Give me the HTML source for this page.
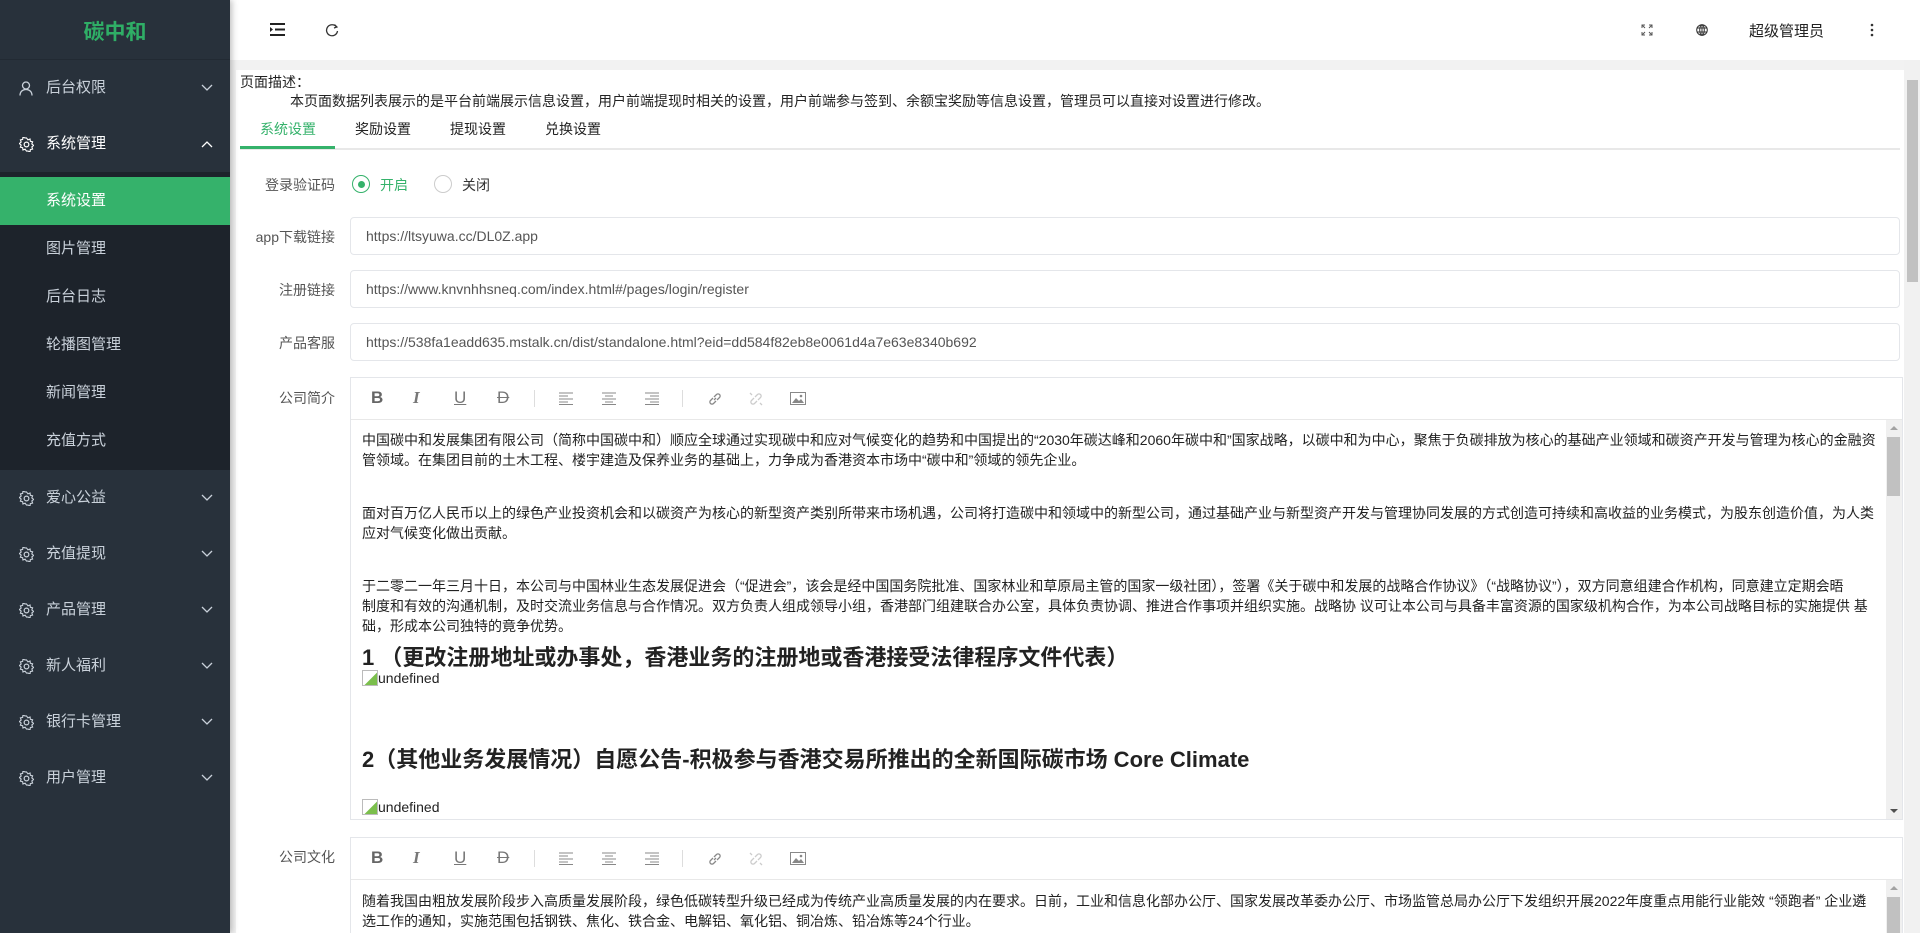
<!DOCTYPE html>
<html><head><meta charset="utf-8">
<style>
*{margin:0;padding:0;box-sizing:border-box}
html{overflow:hidden;width:1920px;height:933px}
body{width:1920px;height:933px;overflow:hidden;background:#f2f2f2;font-family:"Liberation Sans","Noto Sans CJK SC",sans-serif;font-size:14px;color:#333;position:relative}
.abs{position:absolute}
#side{left:0;top:0;width:230px;height:933px;background:#28313b;box-shadow:2px 0 6px rgba(0,0,0,.25);z-index:2}
.logo{position:absolute;left:0;top:0;width:230px;height:60px;line-height:66px;text-align:center;color:#2fae66;font-weight:bold;font-size:21px;border-bottom:1px solid #222a33}
.mi{position:absolute;left:0;width:230px;height:56px;line-height:56px;color:#c9d1da;font-size:15px}
.mi .t{position:absolute;left:46px}
.mi svg.ic{position:absolute;left:19px;top:21px}
.mi svg.ch{position:absolute;left:201px;top:24px}
.sub{position:absolute;left:0;top:172px;width:230px;height:298px;background:#1d232b}
.si{position:absolute;left:0;width:230px;height:48px;line-height:48px;padding-left:46px;color:#c9d1da;font-size:15px}
.si.act{background:#35b26b;color:#fff}
#hdr{left:230px;top:0;width:1690px;height:60px;background:#fff}
#card{left:236px;top:70px;width:1668px;height:863px;background:#fff}
.lbl{position:absolute;width:100px;left:235px;text-align:right;color:#555;font-size:14px}
.inp{position:absolute;left:350px;width:1550px;height:38px;border:1px solid #e4e6ea;border-radius:4px;line-height:36px;padding-left:15px;color:#555;font-size:14px}
.ed{position:absolute;left:350px;width:1553px;border:1px solid #e4e6ea;overflow:hidden}
.tb{position:absolute;left:0;top:0;width:100%;height:42px;border-bottom:1px solid #e8e8e8}
.tb span{position:absolute;top:10px;color:#777;font-size:17px}
.cnt{position:absolute;left:0;top:42px;width:100%;font-size:14px;color:#222;line-height:20px;white-space:nowrap;overflow:hidden}
.cnt div{position:absolute;left:11px}
.vs{position:absolute;right:0;top:42px;width:16px;background:#f0f0f0}
.bi{display:inline-block;width:16px;height:16px;vertical-align:-3px;border:1px solid #bbb;background:linear-gradient(135deg,#fff 55%,#7bbf4c 56%)}
.h{font-size:22px;font-weight:bold;line-height:28px}
.u{font-size:14px;color:#222;line-height:16px}
</style></head><body>
<div id="side" class="abs">
 <div class="logo">碳中和</div>
 <div class="mi" style="top:60px"><svg class="ic" width="14" height="15" viewBox="0 0 14 15"><circle cx="7" cy="4.5" r="3.5" fill="none" stroke="#c9d1da" stroke-width="1.3"/><path d="M1 14.5c0-4 2.7-6 6-6s6 2 6 6" fill="none" stroke="#c9d1da" stroke-width="1.3"/></svg><span class="t">后台权限</span><svg class="ch" width="12" height="8"><path d="M1 1l5 5 5-5" fill="none" stroke="#c9d1da" stroke-width="1.3"/></svg></div>
 <div class="mi" style="top:116px;color:#fff"><svg class="ic" width="15" height="15" viewBox="0 0 16 16"><circle cx="8" cy="8" r="2.5" fill="none" stroke="#fff" stroke-width="1.3"/><path d="M8 1l1.5 2 2.3-.8.3 2.4 2.4.5-.8 2.3 2 1.6-2 1.6.8 2.3-2.4.5-.3 2.4-2.3-.8L8 15l-1.5-2-2.3.8-.3-2.4-2.4-.5.8-2.3-2-1.6 2-1.6-.8-2.3 2.4-.5.3-2.4 2.3.8z" fill="none" stroke="#fff" stroke-width="1.2"/></svg><span class="t">系统管理</span><svg class="ch" width="12" height="8"><path d="M1 7l5-5 5 5" fill="none" stroke="#fff" stroke-width="1.3"/></svg></div>
 <div class="sub">
  <div class="si act" style="top:5px">系统设置</div>
  <div class="si" style="top:53px">图片管理</div>
  <div class="si" style="top:101px">后台日志</div>
  <div class="si" style="top:149px">轮播图管理</div>
  <div class="si" style="top:197px">新闻管理</div>
  <div class="si" style="top:245px">充值方式</div>
 </div>
 <div class="mi" style="top:470px"><svg class="ic" width="15" height="15" viewBox="0 0 16 16"><circle cx="8" cy="8" r="2.5" fill="none" stroke="#c9d1da" stroke-width="1.3"/><path d="M8 1l1.5 2 2.3-.8.3 2.4 2.4.5-.8 2.3 2 1.6-2 1.6.8 2.3-2.4.5-.3 2.4-2.3-.8L8 15l-1.5-2-2.3.8-.3-2.4-2.4-.5.8-2.3-2-1.6 2-1.6-.8-2.3 2.4-.5.3-2.4 2.3.8z" fill="none" stroke="#c9d1da" stroke-width="1.2"/></svg><span class="t">爱心公益</span><svg class="ch" width="12" height="8"><path d="M1 1l5 5 5-5" fill="none" stroke="#c9d1da" stroke-width="1.3"/></svg></div>
 <div class="mi" style="top:526px"><svg class="ic" width="15" height="15" viewBox="0 0 16 16"><circle cx="8" cy="8" r="2.5" fill="none" stroke="#c9d1da" stroke-width="1.3"/><path d="M8 1l1.5 2 2.3-.8.3 2.4 2.4.5-.8 2.3 2 1.6-2 1.6.8 2.3-2.4.5-.3 2.4-2.3-.8L8 15l-1.5-2-2.3.8-.3-2.4-2.4-.5.8-2.3-2-1.6 2-1.6-.8-2.3 2.4-.5.3-2.4 2.3.8z" fill="none" stroke="#c9d1da" stroke-width="1.2"/></svg><span class="t">充值提现</span><svg class="ch" width="12" height="8"><path d="M1 1l5 5 5-5" fill="none" stroke="#c9d1da" stroke-width="1.3"/></svg></div>
 <div class="mi" style="top:582px"><svg class="ic" width="15" height="15" viewBox="0 0 16 16"><circle cx="8" cy="8" r="2.5" fill="none" stroke="#c9d1da" stroke-width="1.3"/><path d="M8 1l1.5 2 2.3-.8.3 2.4 2.4.5-.8 2.3 2 1.6-2 1.6.8 2.3-2.4.5-.3 2.4-2.3-.8L8 15l-1.5-2-2.3.8-.3-2.4-2.4-.5.8-2.3-2-1.6 2-1.6-.8-2.3 2.4-.5.3-2.4 2.3.8z" fill="none" stroke="#c9d1da" stroke-width="1.2"/></svg><span class="t">产品管理</span><svg class="ch" width="12" height="8"><path d="M1 1l5 5 5-5" fill="none" stroke="#c9d1da" stroke-width="1.3"/></svg></div>
 <div class="mi" style="top:638px"><svg class="ic" width="15" height="15" viewBox="0 0 16 16"><circle cx="8" cy="8" r="2.5" fill="none" stroke="#c9d1da" stroke-width="1.3"/><path d="M8 1l1.5 2 2.3-.8.3 2.4 2.4.5-.8 2.3 2 1.6-2 1.6.8 2.3-2.4.5-.3 2.4-2.3-.8L8 15l-1.5-2-2.3.8-.3-2.4-2.4-.5.8-2.3-2-1.6 2-1.6-.8-2.3 2.4-.5.3-2.4 2.3.8z" fill="none" stroke="#c9d1da" stroke-width="1.2"/></svg><span class="t">新人福利</span><svg class="ch" width="12" height="8"><path d="M1 1l5 5 5-5" fill="none" stroke="#c9d1da" stroke-width="1.3"/></svg></div>
 <div class="mi" style="top:694px"><svg class="ic" width="15" height="15" viewBox="0 0 16 16"><circle cx="8" cy="8" r="2.5" fill="none" stroke="#c9d1da" stroke-width="1.3"/><path d="M8 1l1.5 2 2.3-.8.3 2.4 2.4.5-.8 2.3 2 1.6-2 1.6.8 2.3-2.4.5-.3 2.4-2.3-.8L8 15l-1.5-2-2.3.8-.3-2.4-2.4-.5.8-2.3-2-1.6 2-1.6-.8-2.3 2.4-.5.3-2.4 2.3.8z" fill="none" stroke="#c9d1da" stroke-width="1.2"/></svg><span class="t">银行卡管理</span><svg class="ch" width="12" height="8"><path d="M1 1l5 5 5-5" fill="none" stroke="#c9d1da" stroke-width="1.3"/></svg></div>
 <div class="mi" style="top:750px"><svg class="ic" width="15" height="15" viewBox="0 0 16 16"><circle cx="8" cy="8" r="2.5" fill="none" stroke="#c9d1da" stroke-width="1.3"/><path d="M8 1l1.5 2 2.3-.8.3 2.4 2.4.5-.8 2.3 2 1.6-2 1.6.8 2.3-2.4.5-.3 2.4-2.3-.8L8 15l-1.5-2-2.3.8-.3-2.4-2.4-.5.8-2.3-2-1.6 2-1.6-.8-2.3 2.4-.5.3-2.4 2.3.8z" fill="none" stroke="#c9d1da" stroke-width="1.2"/></svg><span class="t">用户管理</span><svg class="ch" width="12" height="8"><path d="M1 1l5 5 5-5" fill="none" stroke="#c9d1da" stroke-width="1.3"/></svg></div>
</div>

<div id="hdr" class="abs">
 <svg class="abs" style="left:40px;top:23px" width="15" height="13"><path d="M0 1h15M5 6.5h10M0 12h15" stroke="#222" stroke-width="2"/><path d="M0 4l3 2.5-3 2.5z" fill="#222"/></svg>
 <svg class="abs" style="left:95px;top:23px" width="14" height="14" viewBox="0 0 14 14"><path d="M11.5 4A5.5 5.5 0 1 0 12.5 8" fill="none" stroke="#333" stroke-width="1.3"/><path d="M9.5 1.5L12 4 9 5" fill="none" stroke="#333" stroke-width="1.2"/></svg>
 <svg class="abs" style="left:1411px;top:24px" width="12" height="12"><path d="M1 4V1h3M8 1h3v3M11 8v3H8M4 11H1V8M1 1l3 3M11 1L8 4M11 11L8 8M1 11l3-3" fill="none" stroke="#555" stroke-width="1"/></svg>
 <svg class="abs" style="left:1466px;top:24px" width="12" height="12" viewBox="0 0 12 12"><circle cx="6" cy="6" r="5.3" fill="none" stroke="#333" stroke-width="1"/><ellipse cx="6" cy="6" rx="2.3" ry="5.3" fill="none" stroke="#333" stroke-width="1"/><path d="M.7 4h10.6M.7 8h10.6M6 .7v10.6" stroke="#333" stroke-width="1"/></svg>
 <div class="abs" style="left:1519px;top:20px;font-size:15px;color:#222">超级管理员</div>
 <svg class="abs" style="left:1640px;top:23px" width="4" height="14"><circle cx="2" cy="2" r="1.3" fill="#333"/><circle cx="2" cy="7" r="1.3" fill="#333"/><circle cx="2" cy="12" r="1.3" fill="#333"/></svg>
</div>

<div class="abs" style="left:1904px;top:60px;width:16px;height:873px;background:#f1f1f1"></div>
<div class="abs" style="left:1907px;top:80px;width:11px;height:202px;background:#c1c1c1"></div>

<div id="card" class="abs"></div>
<div class="abs" style="left:240px;top:72px;font-size:14px;color:#222">页面描述：</div>
<div class="abs" style="left:290px;top:91px;font-size:14px;color:#222;white-space:nowrap">本页面数据列表展示的是平台前端展示信息设置，用户前端提现时相关的设置，用户前端参与签到、余额宝奖励等信息设置，管理员可以直接对设置进行修改。</div>

<div class="abs" style="left:240px;top:148px;width:1660px;height:2px;background:#e8e8e8"></div>
<div class="abs" style="left:240px;top:146px;width:95px;height:3px;background:#35b26b"></div>
<div class="abs" style="left:260px;top:119px;font-size:14px;color:#35b26b">系统设置</div>
<div class="abs" style="left:355px;top:119px;font-size:14px;color:#222">奖励设置</div>
<div class="abs" style="left:450px;top:119px;font-size:14px;color:#222">提现设置</div>
<div class="abs" style="left:545px;top:119px;font-size:14px;color:#222">兑换设置</div>

<div class="lbl" style="top:175px">登录验证码</div>
<div class="abs" style="left:352px;top:175px;width:18px;height:18px;border:1.5px solid #35b26b;border-radius:50%"></div>
<div class="abs" style="left:357.5px;top:180.5px;width:7px;height:7px;background:#35b26b;border-radius:50%"></div>
<div class="abs" style="left:380px;top:175px;color:#35b26b">开启</div>
<div class="abs" style="left:434px;top:175px;width:18px;height:18px;border:1.5px solid #ccc;border-radius:50%"></div>
<div class="abs" style="left:462px;top:175px;color:#333">关闭</div>

<div class="lbl" style="top:227px">app下载链接</div>
<div class="inp" style="top:217px">https://ltsyuwa.cc/DL0Z.app</div>
<div class="lbl" style="top:280px">注册链接</div>
<div class="inp" style="top:270px">https://www.knvnhhsneq.com/index.html#/pages/login/register</div>
<div class="lbl" style="top:333px">产品客服</div>
<div class="inp" style="top:323px">https://538fa1eadd635.mstalk.cn/dist/standalone.html?eid=dd584f82eb8e0061d4a7e63e8340b692</div>

<div class="lbl" style="top:388px">公司简介</div>
<div class="ed" style="top:377px;height:443px">
 <div class="tb">
  <span style="left:20px;font-weight:bold;color:#666">B</span>
  <span style="left:62px;font-style:italic;font-family:'Liberation Serif',serif;font-weight:bold">I</span>
  <span style="left:103px;text-decoration:underline">U</span>
  <span style="left:146px;text-decoration:line-through">D</span>
  <i style="position:absolute;left:183px;top:12px;width:1px;height:17px;background:#ddd"></i>
  <svg class="abs" style="left:208px;top:14px" width="14" height="13"><path d="M0 1h14M0 4h9M0 7h14M0 10h9M0 12.5h14" stroke="#888"/></svg>
  <svg class="abs" style="left:251px;top:14px" width="14" height="13"><path d="M0 1h14M3 4h8M0 7h14M3 10h8M0 12.5h14" stroke="#888"/></svg>
  <svg class="abs" style="left:294px;top:14px" width="14" height="13"><path d="M0 1h14M5 4h9M0 7h14M5 10h9M0 12.5h14" stroke="#888"/></svg>
  <i style="position:absolute;left:331px;top:12px;width:1px;height:17px;background:#ddd"></i>
  <svg class="abs" style="left:357px;top:14px" width="14" height="14"><path d="M6 8L8 6M5 6L2.5 8.5a2 2 0 0 0 3 3L8 9M9 8l2.5-2.5a2 2 0 0 0-3-3L6 5" fill="none" stroke="#888" stroke-width="1.3"/></svg>
  <svg class="abs" style="left:398px;top:14px" width="14" height="14"><path d="M5 6L2.5 8.5a2 2 0 0 0 3 3L8 9M9 8l2.5-2.5a2 2 0 0 0-3-3L6 5M1 1l2 2M13 13l-2-2" fill="none" stroke="#ccc" stroke-width="1.3"/></svg>
  <svg class="abs" style="left:439px;top:14px" width="16" height="13"><rect x=".5" y=".5" width="15" height="12" fill="none" stroke="#888"/><path d="M2 11l4-5 3 3 2-2 3 4z" fill="#888"/><circle cx="11" cy="4" r="1.3" fill="#888"/></svg>
 </div>
 <div class="cnt" style="height:399px">
  <div style="top:10px">中国碳中和发展集团有限公司（简称中国碳中和）顺应全球通过实现碳中和应对气候变化的趋势和中国提出的“2030年碳达峰和2060年碳中和”国家战略，以碳中和为中心，聚焦于负碳排放为核心的基础产业领域和碳资产开发与管理为核心的金融资</div>
  <div style="top:30px">管领域。在集团目前的土木工程、楼宇建造及保养业务的基础上，力争成为香港资本市场中“碳中和”领域的领先企业。</div>
  <div style="top:83px">面对百万亿人民币以上的绿色产业投资机会和以碳资产为核心的新型资产类别所带来市场机遇，公司将打造碳中和领域中的新型公司，通过基础产业与新型资产开发与管理协同发展的方式创造可持续和高收益的业务模式，为股东创造价值，为人类</div>
  <div style="top:103px">应对气候变化做出贡献。</div>
  <div style="top:156px">于二零二一年三月十日，本公司与中国林业生态发展促进会（“促进会”，该会是经中国国务院批准、国家林业和草原局主管的国家一级社团），签署《关于碳中和发展的战略合作协议》（“战略协议”），双方同意组建合作机构，同意建立定期会晤</div>
  <div style="top:176px">制度和有效的沟通机制，及时交流业务信息与合作情况。双方负责人组成领导小组，香港部门组建联合办公室，具体负责协调、推进合作事项并组织实施。战略协 议可让本公司与具备丰富资源的国家级机构合作，为本公司战略目标的实施提供 基</div>
  <div style="top:196px">础，形成本公司独特的竟争优势。</div>
  <div class="h" style="top:224px">1 （更改注册地址或办事处，香港业务的注册地或香港接受法律程序文件代表）</div>
  <div class="u" style="top:250px"><span class="bi"></span>undefined</div>
  <div class="h" style="top:326px">2（其他业务发展情况）自愿公告-积极参与香港交易所推出的全新国际碳市场 Core Climate</div>
  <div class="u" style="top:379px"><span class="bi"></span>undefined</div>
 </div>
 <div class="vs" style="height:399px"><div style="position:absolute;left:1px;top:17px;width:13px;height:59px;background:#c1c1c1"></div><div style="position:absolute;left:4px;top:6px;border:4px solid transparent;border-bottom-color:#a3a3a3;border-top:0"></div><div style="position:absolute;left:4px;bottom:6px;border:4px solid transparent;border-top-color:#505050;border-bottom:0"></div></div>
</div>

<div class="lbl" style="top:847px">公司文化</div>
<div class="ed" style="top:837px;height:96px;border-bottom:0">
 <div class="tb">
  <span style="left:20px;font-weight:bold;color:#666">B</span>
  <span style="left:62px;font-style:italic;font-family:'Liberation Serif',serif;font-weight:bold">I</span>
  <span style="left:103px;text-decoration:underline">U</span>
  <span style="left:146px;text-decoration:line-through">D</span>
  <i style="position:absolute;left:183px;top:12px;width:1px;height:17px;background:#ddd"></i>
  <svg class="abs" style="left:208px;top:14px" width="14" height="13"><path d="M0 1h14M0 4h9M0 7h14M0 10h9M0 12.5h14" stroke="#888"/></svg>
  <svg class="abs" style="left:251px;top:14px" width="14" height="13"><path d="M0 1h14M3 4h8M0 7h14M3 10h8M0 12.5h14" stroke="#888"/></svg>
  <svg class="abs" style="left:294px;top:14px" width="14" height="13"><path d="M0 1h14M5 4h9M0 7h14M5 10h9M0 12.5h14" stroke="#888"/></svg>
  <i style="position:absolute;left:331px;top:12px;width:1px;height:17px;background:#ddd"></i>
  <svg class="abs" style="left:357px;top:14px" width="14" height="14"><path d="M6 8L8 6M5 6L2.5 8.5a2 2 0 0 0 3 3L8 9M9 8l2.5-2.5a2 2 0 0 0-3-3L6 5" fill="none" stroke="#888" stroke-width="1.3"/></svg>
  <svg class="abs" style="left:398px;top:14px" width="14" height="14"><path d="M5 6L2.5 8.5a2 2 0 0 0 3 3L8 9M9 8l2.5-2.5a2 2 0 0 0-3-3L6 5M1 1l2 2M13 13l-2-2" fill="none" stroke="#ccc" stroke-width="1.3"/></svg>
  <svg class="abs" style="left:439px;top:14px" width="16" height="13"><rect x=".5" y=".5" width="15" height="12" fill="none" stroke="#888"/><path d="M2 11l4-5 3 3 2-2 3 4z" fill="#888"/><circle cx="11" cy="4" r="1.3" fill="#888"/></svg>
 </div>
 <div class="cnt" style="height:54px">
  <div style="top:11px">随着我国由粗放发展阶段步入高质量发展阶段，绿色低碳转型升级已经成为传统产业高质量发展的内在要求。日前，工业和信息化部办公厅、国家发展改革委办公厅、市场监管总局办公厅下发组织开展2022年度重点用能行业能效 “领跑者” 企业遴</div>
  <div style="top:31px">选工作的通知，实施范围包括钢铁、焦化、铁合金、电解铝、氧化铝、铜冶炼、铅冶炼等24个行业。</div>
 </div>
 <div class="vs" style="height:54px"><div style="position:absolute;left:1px;top:17px;width:13px;height:40px;background:#c1c1c1"></div><div style="position:absolute;left:4px;top:6px;border:4px solid transparent;border-bottom-color:#a3a3a3;border-top:0"></div></div>
</div>
</body></html>
